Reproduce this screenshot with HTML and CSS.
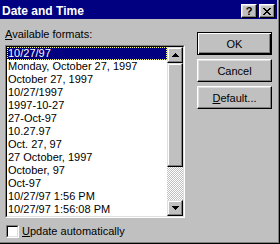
FILE: index.html
```html
<!DOCTYPE html>
<html lang="en">
<head>
    <meta charset="UTF-8">
    <title>Date and Time</title>
    <link rel="stylesheet" href="styles.css">
</head>
<body>
    <div class="dialog">
        <div class="titlebar">
            <span class="title">Date and Time</span>
            <div class="caption-buttons">
                <span class="cap-btn help">?</span>
                <span class="cap-btn close">
                    <svg width="8" height="7" viewBox="0 0 8 7" shape-rendering="crispEdges">
                        <path d="M0 0h2v1H0zM6 0h2v1H6zM1 1h2v1H1zM5 1h2v1H5zM2 2h4v1H2zM3 3h2v1H3zM2 4h4v1H2zM1 5h2v1H1zM5 5h2v1H5zM0 6h2v1H0zM6 6h2v1H6z" fill="#000"/>
                    </svg>
                </span>
            </div>
        </div>

        <div class="content">
            <div class="main">
                <div class="label"><u>A</u>vailable formats:</div>
                <div class="listbox">
                    <div class="listbox-inner">
                        <ul class="items">
                            <li class="selected">10/27/97</li>
                            <li>Monday, October 27, 1997</li>
                            <li>October 27, 1997</li>
                            <li>10/27/1997</li>
                            <li>1997-10-27</li>
                            <li>27-Oct-97</li>
                            <li>10.27.97</li>
                            <li>Oct. 27, 97</li>
                            <li>27 October, 1997</li>
                            <li>October, 97</li>
                            <li>Oct-97</li>
                            <li>10/27/97 1:56 PM</li>
                            <li>10/27/97 1:56:08 PM</li>
                        </ul>
                        <div class="scrollbar">
                            <div class="sb-btn">
                                <svg width="7" height="4" viewBox="0 0 7 4" shape-rendering="crispEdges">
                                    <path d="M3 0h1v1H3zM2 1h3v1H2zM1 2h5v1H1zM0 3h7v1H0z" fill="#000"/>
                                </svg>
                            </div>
                            <div class="sb-thumb"></div>
                            <div class="sb-track"></div>
                            <div class="sb-btn">
                                <svg width="7" height="4" viewBox="0 0 7 4" shape-rendering="crispEdges">
                                    <path d="M0 0h7v1H0zM1 1h5v1H1zM2 2h3v1H2zM3 3h1v1H3z" fill="#000"/>
                                </svg>
                            </div>
                        </div>
                    </div>
                </div>
                <label class="check">
                    <span class="checkbox"><span class="checkbox-inner"></span></span>
                    <span><u>U</u>pdate automatically</span>
                </label>
            </div>

            <div class="buttons">
                <button class="btn default">OK</button>
                <button class="btn">Cancel</button>
                <button class="btn"><u>D</u>efault...</button>
            </div>
        </div>
    </div>
</body>
</html>
```

FILE: styles.css
```css
body {
    margin: 0;
    background: #c0c0c0;
    font-family: "Liberation Sans", Arial, sans-serif;
    font-size: 11px;
    color: #000;
}
.dialog {
    width: 280px;
    height: 244px;
    box-sizing: border-box;
    background: #c0c0c0;
    box-shadow: inset -1px -1px #000, inset -2px -2px #808080;
}
.titlebar {
    width: 277px;
    height: 19px;
    box-sizing: border-box;
    padding: 3px 2px 0 2px;
    background: #000080;
    color: #fff;
    display: flex;
    align-items: center;
}
.title {
    font-weight: bold;
    font-size: 12px;
    line-height: 14px;
}
.caption-buttons {
    margin-left: auto;
    display: flex;
    gap: 2px;
}
.cap-btn {
    width: 16px;
    height: 14px;
    box-sizing: border-box;
    display: flex;
    align-items: center;
    justify-content: center;
    background: #c0c0c0;
    color: #000;
    border: 1px solid;
    border-color: #fff #000 #000 #fff;
    box-shadow: inset -1px -1px #808080, inset 1px 1px #dfdfdf;
}
.help {
    font-weight: bold;
    font-size: 11px;
    line-height: 12px;
}
.content {
    display: flex;
    padding-left: 5px;
}
.main {
    width: 180px;
    padding-top: 9px;
}
.label {
    height: 13px;
    line-height: 13px;
    margin-bottom: 4px;
}
.listbox {
    width: 180px;
    height: 173px;
    box-sizing: border-box;
    border: 1px solid;
    border-color: #808080 #fff #fff #808080;
}
.listbox-inner {
    height: 100%;
    box-sizing: border-box;
    border: 1px solid;
    border-color: #000 #dfdfdf #dfdfdf #000;
    background: #fff;
    display: flex;
}
.items {
    width: 160px;
    margin: 0;
    padding: 0;
    list-style: none;
}
.items li {
    height: 13px;
    line-height: 13px;
    padding-left: 1px;
    white-space: nowrap;
    overflow: hidden;
}
.items li.selected {
    background: #000080;
    color: #fff;
    outline: 1px dotted #ffff80;
    outline-offset: -1px;
}
.scrollbar {
    width: 16px;
    display: flex;
    flex-direction: column;
}
.sb-btn, .sb-thumb {
    box-sizing: border-box;
    background: #c0c0c0;
    border: 1px solid;
    border-color: #dfdfdf #000 #000 #dfdfdf;
    box-shadow: inset -1px -1px #808080, inset 1px 1px #fff;
}
.sb-btn {
    height: 16px;
    display: flex;
    align-items: center;
    justify-content: center;
}
.sb-thumb {
    height: 104px;
}
.sb-track {
    flex: 1;
    background: repeating-conic-gradient(#c0c0c0 0 25%, #fff 0 50%) 0 0 / 2px 2px;
}
.check {
    margin: 7px 0 0 1px;
    display: flex;
    align-items: center;
    gap: 3px;
    line-height: 13px;
}
.checkbox {
    width: 13px;
    height: 13px;
    box-sizing: border-box;
    border: 1px solid;
    border-color: #808080 #fff #fff #808080;
}
.checkbox-inner {
    display: block;
    height: 100%;
    box-sizing: border-box;
    border: 1px solid;
    border-color: #000 #dfdfdf #dfdfdf #000;
    background: #fff;
}
.buttons {
    margin-left: 12px;
    padding-top: 13px;
    display: flex;
    flex-direction: column;
    gap: 4px;
}
.btn {
    width: 75px;
    height: 23px;
    padding: 0;
    font: inherit;
    color: #000;
    background: #c0c0c0;
    border: 1px solid;
    border-color: #fff #000 #000 #fff;
    box-shadow: inset -1px -1px #808080, inset 1px 1px #dfdfdf;
}
.btn.default {
    border-color: #000;
    box-shadow: inset 1px 1px #fff, inset -1px -1px #000, inset -2px -2px #808080;
}
```
